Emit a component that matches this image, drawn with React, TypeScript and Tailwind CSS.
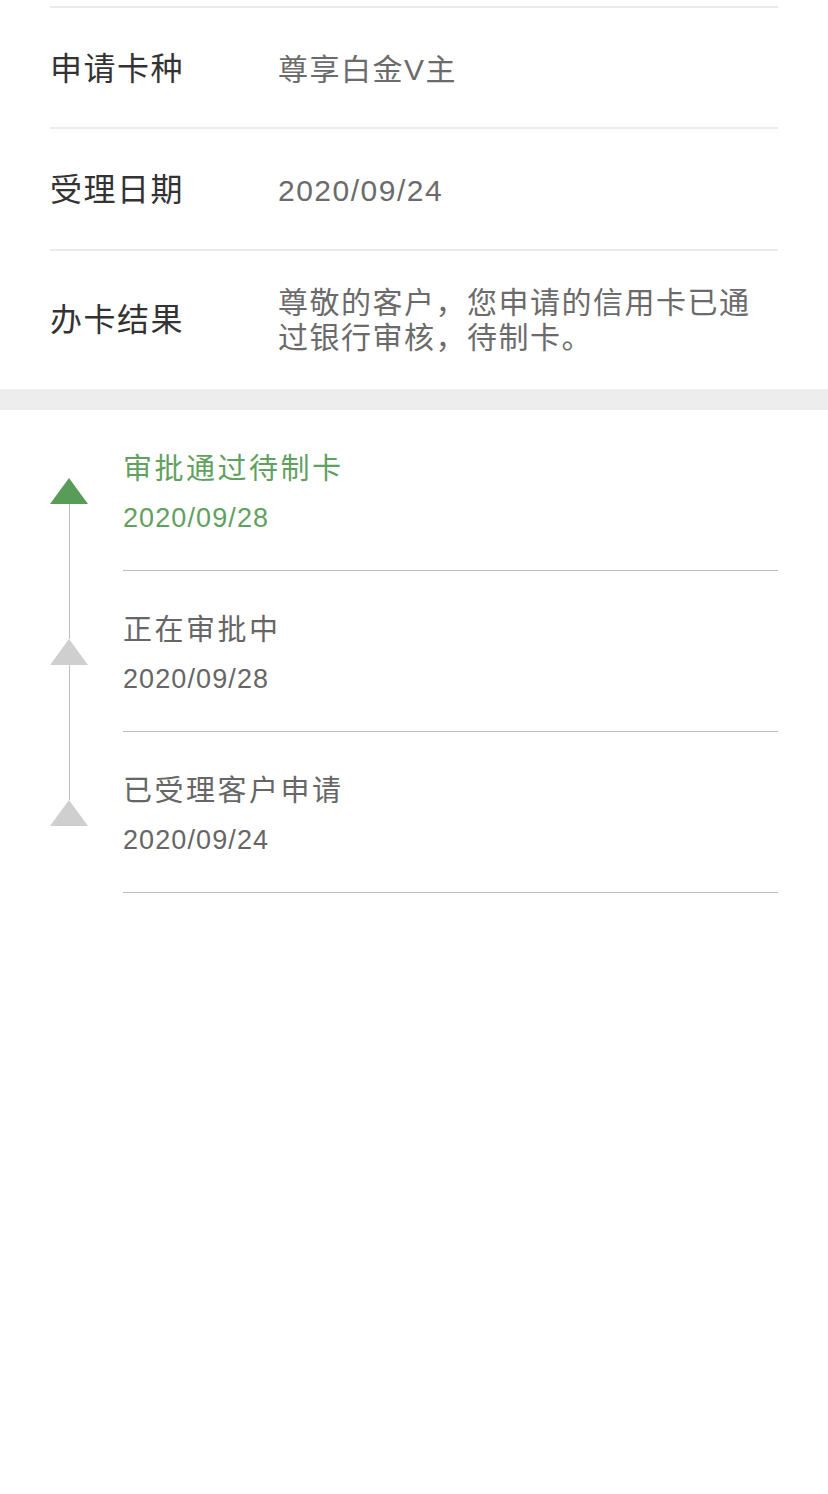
import * as React from 'react';

interface IInfoRow {
  label: string;
  value: string;
  kind: 'first' | 'second' | 'tall';
}

interface IStep {
  title: string;
  date: string;
  active?: boolean;
}

const rows: IInfoRow[] = [
  { label: '申请卡种', value: '尊享白金V主', kind: 'first' },
  { label: '受理日期', value: '2020/09/24', kind: 'second' },
  { label: '办卡结果', value: '尊敬的客户，您申请的信用卡已通过银行审核，待制卡。', kind: 'tall' },
];

const steps: IStep[] = [
  { title: '审批通过待制卡', date: '2020/09/28', active: true },
  { title: '正在审批中', date: '2020/09/28' },
  { title: '已受理客户申请', date: '2020/09/24' },
];

const rowClass = {
  first: 'flex items-center h-[121px] pt-[3px] border-t-2 border-[#ebebeb]',
  second: 'flex items-center h-[122px] pt-[2px] border-t-2 border-[#ebebeb]',
  tall: 'flex items-center pt-[34px] pb-[34px] border-t-2 border-[#ebebeb]',
};

const Triangle = ({ active }: { active?: boolean }) => (
  <svg width="38" height="26" viewBox="0 0 38 26" className="block shrink-0">
    <polygon points="19,0 38,26 0,26" fill={active ? '#589c57' : '#cfcfcf'} />
  </svg>
);

const InfoRow = ({ label, value, kind }: IInfoRow) => (
  <div className={rowClass[kind]}>
    <div className="w-[228px] shrink-0 text-[32px] leading-[36px] tracking-[1.5px] text-[#333333]">{label}</div>
    <div className="flex-1 text-[30px] leading-[35px] tracking-[1.5px] text-[#6b6b6b]">{value}</div>
  </div>
);

const Step = ({ step, first, last }: { step: IStep; first: boolean; last: boolean }) => (
  <div className="flex">
    <div className="w-[73px] shrink-0 flex flex-col items-start">
      <div className="w-[38px] h-[68px] flex justify-center">
        {!first && <div className="w-px h-full bg-[#bdbdbd]" />}
      </div>
      <Triangle active={step.active} />
      <div className="w-[38px] flex-1 flex justify-center">
        {!last && <div className="w-px h-full bg-[#bdbdbd]" />}
      </div>
    </div>

    <div className="flex-1 pt-[41px] pb-[34px] border-b border-[#bdbdbd]">
      <div
        className={
          step.active
            ? 'text-[29px] leading-[36px] tracking-[2.5px] text-[#61a15f]'
            : 'text-[29px] leading-[36px] tracking-[2.5px] text-[#666666]'
        }
      >
        {step.title}
      </div>
      <div
        className={
          step.active
            ? 'mt-[13px] text-[27px] leading-[36px] tracking-[1.1px] text-[#61a15f]'
            : 'mt-[13px] text-[27px] leading-[36px] tracking-[1.1px] text-[#666666]'
        }
      >
        {step.date}
      </div>
    </div>
  </div>
);

export default function App() {
  return (
    <div className="min-h-screen bg-white font-['Liberation_Sans','Noto_Sans_CJK_SC',sans-serif]">
      <div className="pt-[6px] px-[50px]">
        {rows.map((row) => (
          <InfoRow key={row.label} {...row} />
        ))}
      </div>

      <div className="h-[21px] bg-[#ededed]" />

      <div className="px-[50px]">
        {steps.map((step, index) => (
          <Step key={step.title} step={step} first={index === 0} last={index === steps.length - 1} />
        ))}
      </div>
    </div>
  );
}
